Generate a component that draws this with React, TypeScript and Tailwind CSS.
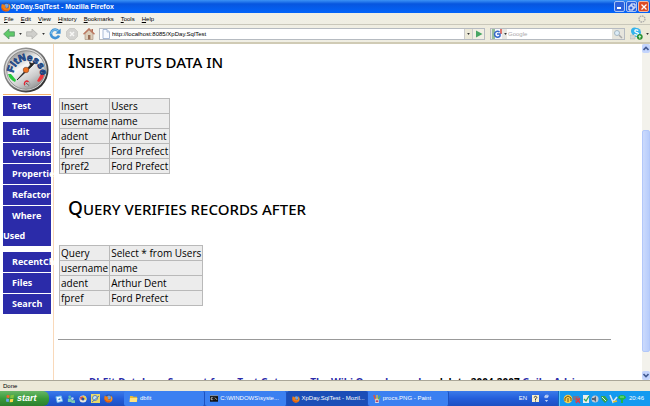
import React from "react";

type IconProps = { className?: string };

function Firefox({ className = "size-3" }: IconProps) {
  return (
    <svg viewBox="0 0 12 12" className={`shrink-0 ${className}`} aria-hidden="true">
      <circle cx="6" cy="6" r="5.2" fill="#2d57a8" />
      <circle cx="6.6" cy="4.6" r="2.6" fill="#6fa4e2" />
      <path d="M1 2c1 1 2 .8 3 1.3L6 5 4.8 6.2C6 8 8 8 9 6.5 10 5 9.300 3 8.200 1.600 11 3 12 5.500 11.200 8 10 11 7 12 4 11.200 1 10 0 7.500.4 4.800z" fill="#ef7d16" />
      <path d="M1 6c1 4 5 5 8 3.500C7 12 2 11 1 8z" fill="#d8430c" />
      <path d="M10 3c1 2 1 4 0 5.500C10.200 6.500 10.200 5 10 3z" fill="#ffd34a" />
    </svg>
  );
}

function Arrow({ back }: { back?: boolean }) {
  return (
    <svg viewBox="0 0 12 12" className="h-3 w-3 shrink-0" aria-hidden="true">
      {back ? (
        <path d="M.6 6 6 1v2.800h5.400v4.400H6V11z" fill="#5fca68" stroke="#57936a" strokeWidth=".8" />
      ) : (
        <path d="M11.400 6 6 1v2.800H.6v4.400H6V11z" fill="#cfcfcb" stroke="#b1b1ad" strokeWidth=".8" />
      )}
    </svg>
  );
}

function Reload() {
  return (
    <svg viewBox="0 0 12 12" className="size-3" aria-hidden="true">
      <path d="M9.200 3A4.200 4.200 0 1 0 10 7.500" fill="none" stroke="#3f92d6" strokeWidth="2.600" />
      <path d="M9.200 3A4.200 4.200 0 0 0 2 6" fill="none" stroke="#8acbf2" strokeWidth="1" />
      <path d="M11.600.5v5.300H6.400z" fill="#3f92d6" />
    </svg>
  );
}

function Stop() {
  return (
    <svg viewBox="0 0 12 12" className="size-3" aria-hidden="true">
      <path d="M3.500.5h5l3 3v5l-3 3h-5l-3-3v-5z" fill="#d3d3d0" stroke="#bcbcb8" strokeWidth=".6" />
      <path d="m4 4 4 4m0-4L4 8" stroke="#f7f7f5" strokeWidth="1.500" />
    </svg>
  );
}

function Home() {
  return (
    <svg viewBox="0 0 12 12" className="size-3" aria-hidden="true">
      <path d="M2 5.500 6 2l4 3.500v6H2z" fill="#dccdb8" stroke="#a58c79" strokeWidth=".6" />
      <path d="M8.500 1H10v3H8.500z" fill="#ab6a55" />
      <path d="M.5 6.300 6 .9l5.500 5.400" fill="none" stroke="#bd7960" strokeWidth="1.500" />
      <path d="M5 7h2.400v4.500H5z" fill="#9a6e56" />
    </svg>
  );
}

function Page({ className = "h-2.5 w-2" }: IconProps) {
  return (
    <svg viewBox="0 0 8 10" className={className} aria-hidden="true">
      <path d="M1 .5h4l2.500 2.500v6.500H1z" fill="#f7faff" stroke="#94aacb" strokeWidth=".8" />
      <path d="M5 .5V3h2.500" fill="none" stroke="#94aacb" strokeWidth=".7" />
    </svg>
  );
}

function Skype() {
  return (
    <svg viewBox="0 0 13 13" className="size-[13px]" aria-hidden="true">
      <circle cx="4.500" cy="4" r="3.500" fill="#35b3ec" />
      <circle cx="6.500" cy="5.500" r="4.500" fill="#35b3ec" />
      <path d="M8.300 3.600C6.500 2.200 4.400 3 5 4.500S9 5.400 8.300 7.200C7.500 8.800 5 8.200 4.500 7" fill="none" stroke="#fff" strokeWidth="1.300" />
      <path d="M0 8h5v4H0z" fill="#d9d9d2" stroke="#aaa" strokeWidth=".4" />
      <circle cx="9.800" cy="9.800" r="2.900" fill="#288f30" />
      <path d="m9.800 8-1.600 2h1v1.500h1.200V10h1z" fill="#d8f4cb" />
    </svg>
  );
}

function Gauge() {
  return (
    <svg viewBox="0 0 46 46" className="size-[46px]" role="img" aria-label="FitNesse">
      <defs>
        <linearGradient id="rim" x2="1" y2="1">
          <stop offset="0" stopColor="#aaa" />
          <stop offset=".5" stopColor="#777" />
          <stop offset="1" stopColor="#111" />
        </linearGradient>
        <linearGradient id="dial" x1=".2" x2=".8" y2="1">
          <stop offset="0" stopColor="#8d8d8d" />
          <stop offset=".4" stopColor="#f7f7f7" />
          <stop offset=".7" stopColor="#cdcdcd" />
          <stop offset="1" stopColor="#8a8a8a" />
        </linearGradient>
        <path id="arc" d="M10.500 26A13 13 0 1 1 37 28" />
      </defs>
      <circle cx="23" cy="23" r="22.500" fill="url(#rim)" />
      <circle cx="22.800" cy="22.800" r="20.800" fill="#ddd" />
      <circle cx="23" cy="23" r="19.300" fill="url(#dial)" stroke="#777" strokeWidth=".7" />
      <path d="m5 27 3 0 5 6-1 2C8 33 6 31 5 27z" fill="#27c83b" />
      <path d="m41 27-3 0-4 7 2 1c3-2 5-5 5-8z" fill="#f1363d" />
      <text className="font-['Liberation_Sans',sans-serif] text-[10px] font-bold" fill="#2a62bd" stroke="#17396f" strokeWidth=".7">
        <textPath href="#arc">FitNesse</textPath>
      </text>
      <path d="m14 33 13.500-15-1-2.500 2.500 1 2.500-.5-2.500 3z" fill="#222" stroke="#222" strokeWidth=".8" />
      <circle cx="23" cy="23" r="2.800" fill="#ef7121" stroke="#663018" strokeWidth=".5" />
      <circle cx="24" cy="37" r="3" fill="#bbb" stroke="#888" strokeWidth=".5" />
      <path d="M22 38a2.200 2.200 0 0 1 3.500-3" fill="none" stroke="#e32636" strokeWidth="1.300" />
      <path d="m23 36 3 2.500" stroke="#333" strokeWidth=".7" />
    </svg>
  );
}

const navGroups = [["Test"], ["Edit", "Versions", "Properties", "Refactor", "Where Used"], ["RecentChanges", "Files", "Search"]];

function Sidebar() {
  return (
    <aside className="w-[54px] shrink-0 border-r border-[#f9d9ba] pl-[3px] pt-[3px]">
      <Gauge />
      <div className="mr-[2px] mt-px border-t border-[#f3b26b]" />
      <nav className="mr-[2px] mt-px flex flex-col gap-[6px]">
        {navGroups.map((group) => (
          <div key={group[0]} className="flex flex-col gap-px">
            {group.map((item) => (
              <a
                key={item}
                href="#"
                className={`block bg-[#2b2ba9] indent-[9px] text-[9px] font-bold leading-5 text-white ${
                  item === "Where Used" ? "" : "whitespace-nowrap"
                }`}
              >
                {item}
              </a>
            ))}
          </div>
        ))}
      </nav>
    </aside>
  );
}

function Heading({ words }: { words: string[] }) {
  return (
    <h1 className="pl-[10px] font-['Noto_Sans',sans-serif] text-[15px] font-medium uppercase leading-6 text-black">
      <span className="text-[19px]">{words[0].charAt(0)}</span>
      {words[0].slice(1)} {words.slice(1).join(" ")}
    </h1>
  );
}

function DataTable({ rows }: { rows: string[][] }) {
  return (
    <table className="ml-px border-collapse bg-[#ececec] text-[10px] leading-[14px] text-black">
      <tbody>
        {rows.map((row) => (
          <tr key={row[0]}>
            {row.map((cell) => (
              <td key={cell} className="border border-[#b9b9b9] px-px py-0">
                {cell}
              </td>
            ))}
          </tr>
        ))}
      </tbody>
    </table>
  );
}

const inserted = [
  ["Insert", "Users"],
  ["username", "name"],
  ["adent", "Arthur Dent"],
  ["fpref", "Ford Prefect"],
  ["fpref2", "Ford Prefect"],
];
const queried = [["Query", "Select * from Users"], ["username", "name"], ["adent", "Arthur Dent"], ["fpref", "Ford Prefect"]];

function TitleBar() {
  return (
    <header className="flex h-[13px] shrink-0 items-center bg-linear-to-b from-[#3c92f5] via-[#0755df] via-30% to-[#0264fa] px-px">
      <Firefox className="size-[10px]" />
      <h2 className="grow font-['Liberation_Sans',sans-serif] text-[7px] font-bold leading-3 text-white">XpDay.SqlTest - Mozilla Firefox</h2>
      <div className="flex gap-px">
        <button aria-label="Minimize" className="flex size-[11px] items-end rounded-xs border border-[#a9c4f5] bg-[#2d61dc] p-[2px]">
          <span className="h-[2px] w-1 bg-white" />
        </button>
        <button aria-label="Restore" className="flex size-[11px] items-center justify-center rounded-xs border border-[#a9c4f5] bg-[#2d61dc]">
          <svg viewBox="0 0 8 8" className="size-2" fill="none" stroke="#fff">
            <path d="M3 3V1h4v4H5M1 3h4v4H1z" />
          </svg>
        </button>
        <button aria-label="Close" className="flex size-[11px] items-center justify-center rounded-xs border border-[#f0b8a4] bg-[#de4c25]">
          <svg viewBox="0 0 8 8" className="size-2" stroke="#fff" strokeWidth="1.300">
            <path d="m1.500 1.500 5 5m0-5-5 5" />
          </svg>
        </button>
      </div>
    </header>
  );
}

const menus = ["File", "Edit", "View", "History", "Bookmarks", "Tools", "Help"];

function MenuBar() {
  return (
    <div className="flex h-3 shrink-0 items-center justify-between border-b border-[#c9c7ba] bg-linear-to-r from-[#f3f3ee] to-[#ece9d8] px-1">
      <div className="flex gap-[7px]">
        {menus.map((menu) => (
          <button key={menu} className="font-['Liberation_Sans',sans-serif] text-[6px] leading-[10px] text-black">
            <span className="underline">{menu.charAt(0)}</span>
            {menu.slice(1)}
          </button>
        ))}
      </div>
      <svg viewBox="0 0 8 8" className="size-2" aria-hidden="true">
        <circle cx="4" cy="4" r="3" fill="none" stroke="#aaa" strokeWidth="1.300" strokeDasharray="1.600 .7" />
      </svg>
    </div>
  );
}

function Caret() {
  return (
    <svg viewBox="0 0 4 3" className="h-[2px] w-[3px]" aria-hidden="true">
      <path d="M0 0h4L2 3z" fill="#333" />
    </svg>
  );
}

function ToolBar() {
  return (
    <div className="flex h-[19px] shrink-0 items-center border-b-2 border-[#d0cbb5] bg-linear-to-r from-[#f3f3ee] to-[#ece9d8] pl-[3px] pr-px">
      <button aria-label="Back" className="flex items-center gap-1"><Arrow back /><Caret /></button>
      <button aria-label="Forward" className="ml-1 flex items-center gap-1"><Arrow /><Caret /></button>
      <button aria-label="Reload" className="ml-1"><Reload /></button>
      <button aria-label="Stop" className="ml-[5px]"><Stop /></button>
      <button aria-label="Home" className="ml-[5px]"><Home /></button>
      <div className="ml-1 flex h-[12px] min-w-0 grow items-center border border-[#b6bbc1] bg-white pl-[2px]">
        <Page />
        <input aria-label="Address" defaultValue="http://localhost:8085/XpDay.SqlTest" className="ml-[2px] min-w-0 grow bg-transparent font-['Liberation_Sans',sans-serif] text-[6px] leading-[10px] text-black outline-none" />
        <button aria-label="Address history" className="flex h-full w-2 items-center justify-center border-l border-[#ccc] bg-[#ece9d8]"><Caret /></button>
        <button aria-label="Go" className="flex h-full w-3 items-center justify-center border-l border-[#ccc] bg-[#f1efe4]">
          <svg viewBox="0 0 8 8" className="size-2"><path d="M1 .5 7.500 4 1 7.500z" fill="#48a664" /></svg>
        </button>
      </div>
      <div className="ml-[5px] flex h-[12px] w-[135px] items-center border border-[#b6bbc1] bg-white">
        <button aria-label="Search engine" className="flex h-full w-4 shrink-0 items-center justify-between bg-[#e8e8e3] pl-px">
          <svg viewBox="0 0 10 10" className="size-[10px]">
            <path d="M0 0h10v10H0z" fill="#f6f8ff" /><path d="M0 0h3v10H0z" fill="#97bd9b" /><path d="M8 0h2v5H8z" fill="#dc7771" />
            <path d="M7.500 3A3 3 0 1 0 8 7V5H5" fill="none" stroke="#3567ca" strokeWidth="1.500" />
          </svg>
          <Caret />
        </button>
        <input aria-label="Search" placeholder="Google" className="ml-px min-w-0 grow bg-transparent font-['Liberation_Sans',sans-serif] text-[6px] leading-[10px] outline-none placeholder:text-[#aaa]" />
        <button aria-label="Search the web" className="flex h-full w-3 shrink-0 items-center justify-center bg-[#e6e5dd]">
          <svg viewBox="0 0 10 10" className="size-[10px]" fill="none"><path d="m6 6 3 3" stroke="#aaa" strokeWidth="1.500" /><circle cx="4" cy="4" r="2.500" fill="#dcecf7" stroke="#a6b8c3" /></svg>
        </button>
      </div>
      <button aria-label="Skype" className="ml-[5px] flex items-center gap-[3px]"><Skype /><Caret /></button>
    </div>
  );
}

function Chevron({ up }: { up?: boolean }) {
  return (
    <button aria-label={up ? "Scroll up" : "Scroll down"} className="flex h-[9px] w-full items-center justify-center rounded-xs bg-[#c3d4fc]">
      <svg viewBox="0 0 6 5" className="h-[5px] w-[6px]" fill="none" stroke="#435b92" strokeWidth="1.600">
        <path d={up ? "m.5 4 2.500-2.500L5.500 4" : "m.5 1 2.500 2.500L5.500 1"} />
      </svg>
    </button>
  );
}

function ScrollBar() {
  return (
    <div className="flex w-2 shrink-0 flex-col bg-[#f3f2ec]">
      <Chevron up />
      <div className="grow-[77]" />
      <div className="grow-[222] rounded-xs border border-[#b2c8fa] bg-linear-to-r from-[#cbdafd] to-[#b8cdfb]" />
      <div className="grow-[19]" />
      <Chevron />
    </div>
  );
}

function Folder() {
  return (
    <svg viewBox="0 0 10 9" className="h-[8px] w-[9px] shrink-0" aria-hidden="true">
      <path d="M1 1h3l1 1h4v6H1z" fill="#e6b937" /><path d="M1 3.500h8.500L8.500 8H.5z" fill="#ffe27e" />
    </svg>
  );
}

function Console() {
  return (
    <svg viewBox="0 0 10 8" className="h-[7px] w-2 shrink-0" aria-hidden="true">
      <path d="M0 0h10v8H0z" fill="#111" /><path d="M0 0h10v1H0z" fill="#9db3d4" /><path d="M3.500 3H1.500v2.500h2M5 3v.5M5 5v.5M6.500 3l2 2.500" fill="none" stroke="#ddd" />
    </svg>
  );
}

function Paint() {
  return (
    <svg viewBox="0 0 9 10" className="h-[9px] w-2 shrink-0" aria-hidden="true">
      <path d="M2 5h5l-.5 5h-4z" fill="#d9dce8" /><path d="M2.500 6 1 1" stroke="#e94f32" strokeWidth="1.500" /><path d="M4.500 6V1" stroke="#e9bd32" strokeWidth="1.500" /><path d="m6 6 2-4" stroke="#53b55b" strokeWidth="1.500" /><path d="M3 7h3v2H3z" fill="#b64965" />
    </svg>
  );
}

function QuickLaunch() {
  return (
    <div className="ml-[6px] flex w-[69px] shrink-0 items-center gap-1">
      <svg viewBox="0 0 9 9" className="size-2"><path d="m1 2 6-1 1.500 6-6 1.500z" fill="#e7f3ff" stroke="#66b8ec" /><path d="m3 5 3-2v3z" fill="#468bd2" /></svg>
      <svg viewBox="0 0 9 9" className="size-2"><circle cx="3" cy="2" r="1.500" fill="#5ac1b5" /><circle cx="6" cy="4" r="1.500" fill="#bdd8f7" /><path d="M1 8V4h4v4zM5 9V6h4v3z" fill="#7ac9b0" /></svg>
      <svg viewBox="0 0 9 9" className="size-2"><circle cx="4.500" cy="4.500" r="4" fill="#e9e9df" /><path d="M4.500.5A4 4 0 0 1 8 6L4.500 4z" fill="#edcf45" /><path d="M1 2.500 4 1l1 3-3 2z" fill="#df5549" /><circle cx="4.500" cy="4.500" r="1.700" fill="#295297" /></svg>
      <svg viewBox="0 0 9 9" className="size-[9px]"><path d="M0 0h9v9H0z" fill="#e8d96b" /><circle cx="4" cy="4" r="2.500" fill="#c6e4f5" stroke="#6083ab" /><path d="m1 8 7-6" stroke="#507db2" /></svg>
      <Firefox className="size-[9px]" />
    </div>
  );
}

function Tray() {
  return (
    <div className="flex h-full w-[92px] shrink-0 items-center border-l border-[#1467bb] bg-[#149af0] pl-1 shadow-[inset_1px_0_#56c5fa]">
      <svg viewBox="0 0 66 10" className="h-[10px] w-[66px] shrink-0" aria-hidden="true">
        <circle cx="5" cy="5" r="4.300" fill="#f5cf4c" /><path d="M2 7V4l3-2 3 2v3M5 4v4" fill="none" stroke="#775412" />
        <path d="M10 2h6v4h-6zM12 5h5v3h-5z" fill="#6c7998" /><path d="m13 4 4 5m0-5-4 5" stroke="#e13b47" strokeWidth="1.300" />
        <path d="M20 1h6v8h-6z" fill="#eaeeea" /><path d="m21 5 2 2 3-5" fill="none" stroke="#30a551" strokeWidth="1.300" />
        <circle cx="32" cy="5" r="3.500" fill="#c2c8d0" /><path d="M29 4h2l2-2v6l-2-2h-2z" fill="#58616e" />
        <path d="M38 2h4l3 4-3 3-3-3z" fill="#34a34a" /><path d="m39 3 4 4" stroke="#e1eee4" />
        <path d="m47 1 3 7 4-5" fill="none" stroke="#e1e7ee" strokeWidth="1.600" /><path d="m50 8 4-1" stroke="#e4c22c" strokeWidth="1.600" />
        <path d="M55 4c0-4 8-4 8 0l-3 2v3h-2V6z" fill="#20b844" /><path d="M57 3h4" stroke="#8ce594" />
      </svg>
      <time className="text-[6px] text-white">20:46</time>
    </div>
  );
}

const tasks = [
  { name: "dbfit", icon: <Folder /> },
  { name: "C:\\WINDOWS\\syste...", icon: <Console /> },
  { name: "XpDay.SqlTest - Mozil...", icon: <Firefox className="size-2" />, active: true },
  { name: "procs.PNG - Paint", icon: <Paint /> },
];

function TaskBar() {
  return (
    <footer className="flex h-[15px] shrink-0 items-center bg-linear-to-b from-[#3b7bea] via-[#245edb] to-[#1d4fc1] font-['Liberation_Sans',sans-serif]">
      <button className="flex h-full w-[49px] shrink-0 items-center gap-[2px] rounded-r-md bg-linear-to-b from-[#67b666] via-[#399b3a] to-[#2c7e2d] pl-[6px] text-[9px] font-bold italic text-white">
        <svg viewBox="0 0 10 10" className="size-[9px]"><path d="m1 1 3 .3L3.500 4.500.4 4z" fill="#ef6332" /><path d="m5 1.500 4-.6L8.300 4.500l-3.700.3z" fill="#82c441" /><path d="m.3 5 3 .6L3 9 0 8.300z" fill="#64a7f0" /><path d="m4.500 5.700 3.700-.3L7.600 9l-3.500.3z" fill="#ffd647" /></svg>
        start
      </button>
      <QuickLaunch />
      <div className="flex h-full min-w-0 max-w-[325px] grow">
        {tasks.map((task) => (
          <button key={task.name} className={`flex h-full min-w-0 flex-1 items-center gap-[2px] whitespace-nowrap rounded-xs border-r border-[#1d51be] pl-[5px] text-[6px] text-white ${task.active ? "bg-[#1b4eb7]" : "bg-[#3b80f1]"}`}>
            {task.icon}{task.name}
          </button>
        ))}
      </div>
      <div className="ml-auto flex shrink-0 items-center gap-[5px] pr-[9px] text-[6px] text-white">
        EN
        <svg viewBox="0 0 8 8" className="size-[7px]"><path d="M0 0h8v8H0z" fill="#f7efcb" /><path d="M2.500 3c0-2 3-2 3 0L4 4.500V6M4 6.500v1" fill="none" stroke="#222" /></svg>
        <svg viewBox="0 0 6 10" className="h-[9px] w-[5px]"><path d="M2 1h3v2H2zM1 2h3v2H1z" fill="none" stroke="#fff" strokeWidth=".7" /><path d="M1 7h4L3 9z" fill="#fff" /></svg>
      </div>
      <Tray />
    </footer>
  );
}

export default function App() {
  return (
    <div className="flex h-screen flex-col overflow-hidden bg-white font-['Open_Sans',sans-serif]">
      <TitleBar />
      <MenuBar />
      <ToolBar />
      <div className="flex min-h-0 grow overflow-hidden">
        <Sidebar />
        <main className="min-w-0 grow overflow-hidden pl-1 pr-[31px] pt-[5px]">
          <Heading words={["Insert", "puts", "data", "in"]} />
          <div className="mt-6"><DataTable rows={inserted} /></div>
          <div className="mt-[22px]"><Heading words={["Query", "verifies", "records", "after"]} /></div>
          <div className="mt-6"><DataTable rows={queried} /></div>
          <hr className="mt-[33px] border-[#999]" />
          <p className="mt-[35px] whitespace-nowrap text-center text-[10px] font-bold leading-[14px] text-black">
            <a href="#" className="text-[#2b2ba9]">DbFit Database Support from Test Gateway. The Wiki Open Journal</a> and data 2004-2007 <a href="#" className="text-[#2b2ba9]">Gojko Adzic</a>
          </p>
        </main>
        <ScrollBar />
      </div>
      <div className="h-[11px] shrink-0 border-t border-[#aaa798] bg-[#ece9d8] px-[3px] font-['Liberation_Sans',sans-serif] text-[6px] leading-[10px] text-black">Done</div>
      <TaskBar />
    </div>
  );
}
